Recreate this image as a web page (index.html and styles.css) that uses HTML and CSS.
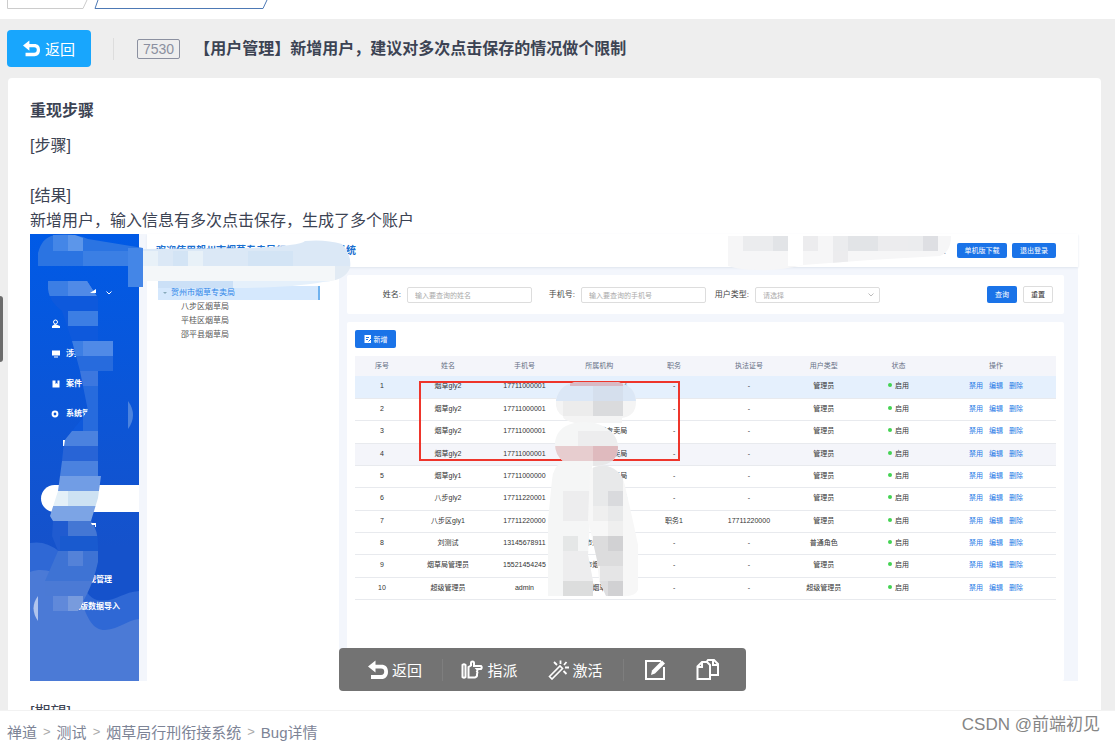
FILE: index.html
```html
<!DOCTYPE html>
<html lang="zh-CN">
<head>
<meta charset="utf-8">
<title>Bug详情</title>
<link rel="stylesheet" href="styles.css">
</head>
<body>
<svg class="defs" width="0" height="0" aria-hidden="true">
  <symbol id="back" viewBox="0 0 20 20"><path d="M7.500.5 0 6.500l7.500 6V8.500H13c2.300 0 3.200 1 3.200 3S15.300 15 13 15H3V19H13.500c4 0 6.500-2.700 6.500-7.300S17.500 4.700 13.500 4.700H7.500z" fill="currentColor"/></symbol>
</svg>

<div class="tabs">
  <svg width="280" height="9" viewBox="0 0 280 9" fill="none" aria-hidden="true">
    <path d="M7.500 0V8.500H83L87 0" stroke="#ccc"/>
    <path d="M98 0 95 8.500H263L267 0" stroke="#4d79b5"/>
  </svg>
</div>

<header class="bar">
  <button class="back"><svg width="17" height="17"><use href="#back"/></svg>返回</button>
  <span class="rule"></span>
  <span class="num">7530</span>
  <h1>【用户管理】新增用户，建议对多次点击保存的情况做个限制</h1>
</header>

<main class="stage">
  <span class="handle"></span>
  <article class="card">
    <h2>重现步骤</h2>
    <p>[步骤]</p>
    <p class="gap">[结果]</p>
    <p>新增用户，输入信息有多次点击保存，生成了多个账户</p>

    <div class="shot">
      <nav class="side">
        <svg class="waves" viewBox="30 234 109 447" preserveAspectRatio="none" aria-hidden="true">
          <path fill="#2f68d5" d="M30 543Q46 540 60 552C75 565 83 597 97 600C115 603 122 592 139 591V681H30Z"/>
          <path fill="#4b7ad6" d="M30 572C50 565 68 578 80 598C88 620 93 630 105 630C120 629 127 620 139 619V681H30Z"/>
        </svg>
        <div class="who"><svg width="6" height="4" viewBox="0 0 6 4"><path d="M.5.5 3 3 5.500.5" fill="none" stroke="#fff"/></svg></div>
        <a class="item" href="#"><svg width="10" height="10" viewBox="0 0 10 10"><circle cx="4.500" cy="3" r="2" fill="none" stroke="#fff"/><path d="M1 9V7l3-2 5 2v2z" fill="#fff"/></svg></a>
        <a class="item" href="#"><svg width="10" height="10" viewBox="0 0 10 10"><path d="M1 1.500h8v5H1zM3 7.500h4v1H3z" fill="#fff"/></svg>涉案</a>
        <a class="item" href="#"><svg width="10" height="10" viewBox="0 0 10 10"><path d="M1.500 1.500h3V5l1-1 1 1V1.500h2v7h-7z" fill="#fff"/></svg>案件</a>
        <a class="item" href="#"><svg width="10" height="10" viewBox="0 0 10 10"><circle cx="4" cy="5" r="2.400" fill="none" stroke="#fff" stroke-width="2"/></svg>系统管</a>
        <span class="pill"></span>
        <a class="sub law" href="#">法规管理</a>
        <a class="sub" href="#">单机版数据导入</a>
      </nav>

      <div class="app">
        <div class="apphead">
          <b>欢迎使用贺州市烟草专卖局行刑衔接管理系统</b>
          <span class="tick">、</span>
          <button class="btn wide">单机版下载</button>
          <button class="btn mid">退出登录</button>
        </div>
        <div class="cols">
          <ul class="tree">
            <li class="on"><i></i>贺州市烟草专卖局</li>
            <li>八步区烟草局</li>
            <li>平桂区烟草局</li>
            <li>邵平县烟草局</li>
          </ul>
          <div class="work">
            <form class="panel search">
              <label for="n">姓名:</label><input id="n" placeholder="输入要查询的姓名">
              <label for="t">手机号:</label><input id="t" placeholder="输入要查询的手机号">
              <label for="u">用户类型:</label>
              <span class="pick"><select id="u"><option>请选择</option></select><svg width="6" height="4" viewBox="0 0 6 4"><path d="M.5.5 3 3 5.500.5" fill="none" stroke="#bbb"/></svg></span>
              <span class="grow"></span>
              <button class="btn" type="button">查询</button>
              <button class="btn plain" type="button">重置</button>
            </form>
            <section class="panel list">
              <button class="btn add"><svg width="8" height="8" viewBox="0 0 8 8"><path d="M.5 0h6.500v8H.5z" fill="#fff"/><path d="M2 2.500h3M2 4.500h2M4.500 6.500l3-3" stroke="#1a73e8"/></svg>新增</button>
              <table>
                <colgroup><col class="c1"><col class="c2"><col><col><col><col><col><col><col class="c9"></colgroup>
                <thead><tr><th>序号</th><th>姓名</th><th>手机号</th><th>所属机构</th><th>职务</th><th>执法证号</th><th>用户类型</th><th>状态</th><th>操作</th></tr></thead>
                <tbody>
                <tr class="sel"><td>1</td><td>烟草gly2</td><td>17711000001</td><td>贺州市烟草专卖局</td><td>-</td><td>-</td><td>管理员</td><td><i></i>启用</td><td><a href="#">禁用</a><a href="#">编辑</a><a href="#">删除</a></td></tr>
                <tr><td>2</td><td>烟草gly2</td><td>17711000001</td><td>贺州市烟草专卖局</td><td>-</td><td>-</td><td>管理员</td><td><i></i>启用</td><td><a href="#">禁用</a><a href="#">编辑</a><a href="#">删除</a></td></tr>
                <tr><td>3</td><td>烟草gly2</td><td>17711000001</td><td>贺州市烟草专卖局</td><td>-</td><td>-</td><td>管理员</td><td><i></i>启用</td><td><a href="#">禁用</a><a href="#">编辑</a><a href="#">删除</a></td></tr>
                <tr class="hov"><td>4</td><td>烟草gly2</td><td>17711000001</td><td>贺州市烟草专卖局</td><td>-</td><td>-</td><td>管理员</td><td><i></i>启用</td><td><a href="#">禁用</a><a href="#">编辑</a><a href="#">删除</a></td></tr>
                <tr><td>5</td><td>烟草gly1</td><td>17711000000</td><td>贺州市烟草专卖局</td><td>-</td><td>-</td><td>管理员</td><td><i></i>启用</td><td><a href="#">禁用</a><a href="#">编辑</a><a href="#">删除</a></td></tr>
                <tr><td>6</td><td>八步gly2</td><td>17711220001</td><td>贺州市烟草专卖局</td><td>-</td><td>-</td><td>管理员</td><td><i></i>启用</td><td><a href="#">禁用</a><a href="#">编辑</a><a href="#">删除</a></td></tr>
                <tr><td>7</td><td>八步区gly1</td><td>17711220000</td><td>八步区烟草局</td><td>职务1</td><td>17711220000</td><td>管理员</td><td><i></i>启用</td><td><a href="#">禁用</a><a href="#">编辑</a><a href="#">删除</a></td></tr>
                <tr><td>8</td><td>刘测试</td><td>13145678911</td><td>贺州市烟草专卖局</td><td>-</td><td>-</td><td>普通角色</td><td><i></i>启用</td><td><a href="#">禁用</a><a href="#">编辑</a><a href="#">删除</a></td></tr>
                <tr><td>9</td><td>烟草局管理员</td><td>15521454245</td><td>贺州市烟草专卖局</td><td>-</td><td>-</td><td>管理员</td><td><i></i>启用</td><td><a href="#">禁用</a><a href="#">编辑</a><a href="#">删除</a></td></tr>
                <tr><td>10</td><td>超级管理员</td><td>admin</td><td>贺州市烟草专卖局</td><td>-</td><td>-</td><td>超级管理员</td><td><i></i>启用</td><td><a href="#">禁用</a><a href="#">编辑</a><a href="#">删除</a></td></tr>
                </tbody>
              </table>
            </section>
          </div>
        </div>
      </div>

      <svg class="marks" width="1048" height="447" viewBox="30 234 1048 447" aria-hidden="true">
        <defs>
          <clipPath id="snake"><path d="M48 281H87L98 298V311H98V341H113V371H98V476H101L98 498 91 521Q98 530 98 545V562Q94 580 87 594L78 611H53V596H45V581L58 551 52 536 53 521 50 516 58 491 62 461 64 441 88 411 80 371 72 341 62 311Q46 300 48 281Z"/></clipPath>
          <clipPath id="left"><path d="M555 444C556 426 572 422 585 422 603 422 618 433 618 447S608 466 592 466L590 520 588 555 593 581V596H563V596H548V520L552 480Q553 466 563 461 555 455 555 444Z"/></clipPath>
          <clipPath id="right"><path d="M590 470Q595 465 607 466 622 470 625 486L633 521 638 545V590Q635 597 622 596H606L599 580 597 560 588 520Z"/></clipPath>
          <clipPath id="blob"><path d="M556 400Q560 382 580 382H616Q636 385 636 402 636 416 622 418V423H575Q562 420 563 416 555 412 556 400Z"/></clipPath>
          <clipPath id="top"><path d="M728 236H951Q951 252 940 256L870 260 803 265Q780 271 758 270 740 270 728 266Z"/></clipPath>
          <clipPath id="banner"><path d="M143 249 250 248Q300 246 305 241 325 239 342 244 352 255 350 268 345 281 323 282 290 288 235 288H158V281H143Z"/></clipPath>
        </defs>
        <path fill="none" stroke="#ee352b" stroke-width="2" d="M420 382H679V460H420Z"/>
        <path fill="#2b74e2" d="M38 266V253Q42 237 55 235 75 233 88 239L143 248V287H128V266Z"/>
        <path fill="#4486e7" d="M53 235H68V251H53zM128 248H143V287H128z"/><path fill="#5c96ea" d="M68 235H75L83 238V251H68z"/><path fill="#3b7fe4" d="M83 251H128V266H83z"/>
        <g clip-path="url(#snake)">
          <path fill="#0e59dc" d="M40 281H115V461H40z"/>
          <path fill="#3c7ee4" d="M48 281H98V296H48zM68 311H98V326H68zM68 341H113V356H68z"/><path fill="#508ae7" d="M68 281H98V296H68zM83 341H113V356H83z"/>
          <path fill="#276bdd" d="M72 356H113V371H72zM83 386H98V431H83z"/><path fill="#3c77df" d="M78 371H98V386H78z"/>
          <path fill="#4b82df" d="M60 431H98V446H60zM55 461H98V476H55z"/><path fill="#2864d6" d="M60 446H98V461H60z"/>
          <path fill="#719de5" d="M55 476H101V491H55z"/><path fill="#e4f0f8" d="M50 491H68V506H50z"/><path fill="#cde2f3" d="M68 491H101V506H68z"/>
          <path fill="#7ca4e5" d="M45 506H101V521H45z"/><path fill="#205bd0" d="M45 521H68V551H45z"/><path fill="#4477d4" d="M68 521H98V536H68z"/><path fill="#195acf" d="M60 536H98V551H60z"/>
          <path fill="#3e73d4" d="M40 551H98V581H40z"/><path fill="#5482d8" d="M68 551H83V566H68z"/><path fill="#4b7ad5" d="M40 581H98V611H40z"/><path fill="#6089da" d="M53 596H68V611H53z"/><path fill="#789bdd" d="M68 596H83V611H68z"/>
        </g>
        <path fill="#4b83df" d="M128 401Q138 415 128 429z"/><path fill="#b1c5ed" d="M38 596Q29 608 38 621z"/>
        <path fill="#fff" d="M90 293l6-4v4zM63 440h2l-1 6h-1zM91 523h5v4h-1v-2h-3z"/>
        <g clip-path="url(#banner)">
          <path fill="#dbe8f6" d="M143 240H352V266H143z"/><path fill="#e8f1f8" d="M143 251H158V266H143zM188 251H203V266H188z"/><path fill="#d3e4f5" d="M173 251H188V266H173zM248 251H293V266H248z"/><path fill="#f4f7f9" d="M143 266H335V281H143z"/><path fill="#e2ebf4" d="M335 266H352V281H335z"/><path fill="#cbe0f7" d="M158 281H233V288H158z"/><path fill="#e5f0fb" d="M233 281H330V288H233z"/>
        </g>
        <g clip-path="url(#top)">
          <path fill="#f6f6f7" d="M728 236H952V272H728z"/><path fill="#ebecee" d="M743 236H773V251H743zM833 236H863V251H833zM908 236H923V251H908z"/><path fill="#e2e4e7" d="M773 236H788V251H773zM848 236H878V251H848z"/><path fill="#fff" d="M788 236H803V266H788z"/><path fill="#ececee" d="M803 236H818V251H803zM878 236H908V251H878zM833 251H848V266H833z"/><path fill="#dedfe3" d="M923 236H938V251H923z"/>
        </g>
        <g clip-path="url(#blob)">
          <path fill="#f4f4f4" d="M555 380H637V424H555z"/><path fill="#dbe7f6" d="M555 382H637V401H555z"/><path fill="#d5dfed" d="M593 386H623V401H593z"/><path fill="#d9b9c4" d="M570 382H623V386H570z"/><path fill="#ececec" d="M563 401H593V416H563z"/><path fill="#dadbdd" d="M593 401H623V416H593z"/>
        </g>
        <g clip-path="url(#left)">
          <path fill="#f5f6f6" d="M547 420H620V598H547z"/><path fill="#ededee" d="M578 431H620V446H578zM563 491H593V521H563zM563 551H593V581H563z"/><path fill="#e7cdcf" d="M554 446H593V461H554z"/><path fill="#dfbabe" d="M593 446H620V461H593z"/><path fill="#e8e8e9" d="M593 461H620V467H593z"/><path fill="#dcdddd" d="M563 581H593V596H563z"/><path fill="#e5e7e7" d="M563 536H578V551H563z"/>
        </g>
        <g clip-path="url(#right)">
          <path fill="#f7f7f7" d="M588 465H640V598H588z"/><path fill="#e8e9ea" d="M593 466H623V521H593z"/><path fill="#d9dadd" d="M608 491H623V506H608z"/><path fill="#efefef" d="M593 506H608V521H593zM608 521H623V536H608z"/><path fill="#dcdcdd" d="M593 536H623V566H593z"/><path fill="#e5e5e6" d="M600 566H623V581H600z"/><path fill="#d1d1d3" d="M608 581H623V596H608zM608 536H623V551H608z"/><path fill="#dedee0" d="M598 581H608V596H598z"/>
        </g>
      </svg>
    </div>
    <p class="next">[期望]</p>
  </article>

  <div class="tools">
    <button class="t1"><svg width="20" height="20"><use href="#back"/></svg>返回</button>
    <span class="bar-line"></span>
    <button class="t2"><svg width="22" height="20" viewBox="0 0 22 20" fill="none" stroke="currentColor" stroke-width="2"><path d="M1.500 5q1.500-1.500 3 0V17q-1.500 1.500-3 0zM7.500 17.500V7L10 5.500V3q0-1.500 1.500-1.500T13 3v3h7q1.500 1.500 0 3h-4q1 1 0 2.500 1 1 0 2.500.5 3-2 3.500z"/></svg>指派</button>
    <button class="t3"><svg width="22" height="20" viewBox="0 0 22 20" fill="none" stroke="currentColor"><path stroke-width="1.600" d="M1.500 16.500 12 6l2.500 2.500L4 19z"/><path stroke-width="1.800" d="M6 2l3 3M12.500.5V4M18.500 2 16 5M17 7.500h4M15.500 11l3 3"/></svg>激活</button>
    <span class="bar-line"></span>
    <button class="t4" aria-label="编辑"><svg width="22" height="22" viewBox="0 0 22 22" fill="none" stroke="currentColor" stroke-width="2"><path d="M17 2H2v18h18V8"/><path fill="currentColor" stroke="none" d="M8 11.500 18 1.500l3 3-10 10-4 1.500z"/></svg></button>
    <button class="t5" aria-label="复制"><svg width="23" height="22" viewBox="0 0 23 22" fill="none" stroke="currentColor" stroke-width="2"><path d="M6 3H11L14 6V20H1.500V7.500zM6 3V8H1.500"/><path d="M10.500 3 12 1h6l4 4V16h-8M17 1V6h5"/></svg></button>
  </div>
</main>

<footer class="foot">
  <nav><a href="#">禅道</a><i>&gt;</i><a href="#">测试</a><i>&gt;</i><a href="#">烟草局行刑衔接系统</a><i>&gt;</i><span>Bug详情</span></nav>
  <span class="sign">CSDN @前端初见</span>
</footer>
</body>
</html>
```
FILE: styles.css
```css
* { box-sizing: border-box; }
body {
  margin: 0;
  height: 100vh;
  display: flex;
  flex-direction: column;
  overflow: hidden;
  background: #eee;
  color: #3c4353;
  font: 16px/25px "Liberation Sans", "Noto Sans CJK SC", sans-serif;
}
h1, h2, p, ul { margin: 0; padding: 0; }
button { font-family: inherit; border: 0; padding: 0; cursor: pointer; }
a { color: inherit; text-decoration: none; }
svg { display: block; flex: none; }
.defs { position: absolute; }

.tabs { height: 19px; background: #fff; flex: none; }
.bar { height: 59px; flex: none; display: flex; align-items: center; padding: 0 7px; }
.back {
  width: 84px; height: 37px; border-radius: 4px;
  background: #18a6fd; color: #fff; font-size: 15px;
  display: flex; align-items: center; justify-content: center; gap: 5px;
}
.rule { width: 1px; height: 22px; background: #ddd; margin: 0 23px 0 22px; }
.num {
  border: 1px solid #8b90a0; border-radius: 2px; color: #8b90a0;
  font-size: 14px; line-height: 18px; padding: 0 5px;
}
h1 { font-size: 16px; margin-left: 14px; white-space: nowrap; }

.stage { flex: 1; min-height: 0; position: relative; display: flex; padding: 0 14px 0 8px; }
.handle { position: absolute; left: 0; top: 218px; width: 3px; height: 66px; background: #6c6c6c; border-radius: 0 3px 3px 0; }
.card { flex: 1; min-width: 0; background: #fff; border-radius: 4px 4px 0 0; padding: 20px 23px 0 22px; overflow: hidden; }
h2 { font-size: 16px; margin-bottom: 10px; }
.gap { margin-top: 25px; }
.next { margin-top: 19px; }

.shot { position: relative; display: flex; height: 447px; margin-top: 1px; background: #f3f6fc; font-size: 7px; line-height: 14px; }
.side { position: relative; width: 109px; flex: none; background: linear-gradient(#005ae6, #1552cb 70%); color: #fff; font-size: 8px; font-weight: bold; padding-top: 43px; }
.waves { position: absolute; inset: 0; width: 100%; height: 100%; }
.who { height: 32px; display: flex; align-items: center; padding-left: 76px; position: relative; }
.item { height: 30px; display: flex; align-items: center; gap: 5px; padding-left: 21px; position: relative; }
.pill { display: block; height: 27px; margin: 56px 0 54px 11px; background: #fff; border-radius: 14px 0 0 14px; }
.sub { position: relative; display: block; line-height: 27px; padding-left: 34px; }
.law { padding-left: 50px; }
.app { flex: 1; min-width: 0; display: flex; flex-direction: column; padding-left: 8px; }
.apphead { height: 33px; flex: none; background: #fff; display: flex; align-items: center; gap: 5px; padding: 0 22px 0 9px; box-shadow: 0 1px 2px #dfe5ee; }
.apphead b { color: #1a6fd0; font-size: 10px; white-space: nowrap; flex: 1; }
.tick { margin-right: 2px; }
.btn { height: 17px; width: 30px; background: #1a73e8; color: #fff; border-radius: 2px; font-size: 7px; line-height: 15px; display: flex; align-items: center; justify-content: center; gap: 2px; }
.wide { width: 50px; height: 15px; }
.mid { width: 44px; height: 15px; }
.plain { background: #fff; color: #333; border: 1px solid #ddd; }
.cols { flex: 1; display: flex; gap: 8px; padding-right: 14px; }
.tree { width: 192px; background: #fff; list-style: none; padding: 19px 19px 0 11px; font-size: 8px; color: #555; }
.tree li { padding-left: 23px; height: 14px; }
.tree .on { background: #d5e8fd; color: #2b84e8; border-right: 2px solid #70b2ee; padding-left: 5px; display: flex; align-items: center; gap: 4px; }
.on i { border: 2px solid transparent; border-top-color: #8ab; border-bottom: 0; }
.work { flex: 1; min-width: 0; display: flex; flex-direction: column; gap: 8px; padding-top: 8px; }
.panel { background: #fff; border-radius: 2px; }
.search { height: 39px; display: flex; align-items: center; gap: 6px; padding: 0 11px 0 0; font-size: 8px; color: #444; }
.search label { width: 54px; text-align: right; white-space: nowrap; }
.search input, .search select { width: 125px; height: 16px; border: 1px solid #ddd; border-radius: 2px; background: #fff; padding: 0 7px; font: 7px/14px "Noto Sans CJK SC", sans-serif; color: #aaa; appearance: none; }
.search input + label { width: 37px; }
.search input::placeholder { color: #aaa; }
.pick { position: relative; }
.pick select { display: block; }
.pick svg { position: absolute; right: 6px; top: 6px; }
.grow { flex: 1; }
.list { flex: 1; padding: 8px 8px 0; }
.add { width: 41px; height: 18px; margin-bottom: 8px; }
table { width: 100%; table-layout: fixed; border-collapse: collapse; color: #333; text-align: center; }
.c1 { width: 54px; }
.c2 { width: 78px; }
.c9 { width: 120px; }
th, td { padding: 0 0 1px; font-size: 7px; line-height: 12px; height: 22px; white-space: nowrap; }
th { height: 20px; background: #f4f5fa; color: #667085; font-weight: normal; }
td { border-bottom: 1px solid #e8eaee; }
tr:nth-child(3n) td { height: 23px; }
.sel td { background: #e5f0fd; }
.hov td { background: #f4f5fa; }
td i { display: inline-block; width: 4px; height: 4px; margin-right: 3px; border-radius: 50%; background: #43d352; vertical-align: 1px; }
td a { color: #2277e6; }
td a + a { margin-left: 6px; }
.marks { position: absolute; left: 0; top: 0; }

.tools {
  position: absolute; left: 339px; bottom: 19px; width: 407px; height: 43px;
  background: #737373; border-radius: 4px; display: flex; align-items: center; padding-left: 9px;
}
.tools button { background: none; color: #fff; font-size: 15px; display: flex; align-items: center; justify-content: center; gap: 4px; height: 43px; }
.bar-line { width: 1px; height: 22px; background: #7e7e7e; }
.tools .t1 { width: 94px; }
.tools .t2 { width: 93px; }
.tools .t3 { width: 87px; padding-right: 8px; gap: 2px; }
.tools .t4 { width: 61px; }
.tools .t5 { width: 45px; }

.foot { height: 33px; flex: none; background: #fff; border-top: 1px solid #f2f2f2; display: flex; justify-content: space-between; padding: 0 15px 0 7px; font-size: 15px; color: #7d8496; }
.foot nav { display: flex; align-items: center; gap: 6px; padding-top: 10px; }
.foot i { font-style: normal; font-size: 13px; line-height: 20px; color: #aaa; }
.sign { font-size: 17px; line-height: 28px; color: #858585; }
```
